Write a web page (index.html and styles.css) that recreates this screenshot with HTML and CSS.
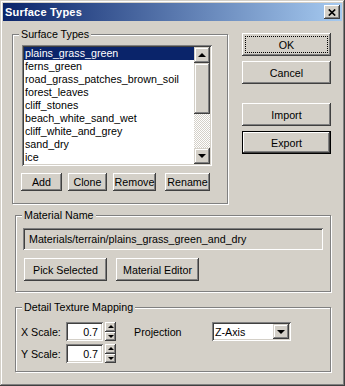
FILE: index.html
```html
<!DOCTYPE html>
<html>
<head>
<meta charset="utf-8">
<link rel="stylesheet" href="styles.css">
</head>
<body>
<div class="window">
  <div class="titlebar">
    <span class="title">Surface Types</span>
    <span class="close"><svg width="8" height="7" viewBox="0 0 8 7"><path d="M0.8 0.5 L7.2 6.5 M7.2 0.5 L0.8 6.5" stroke="#000" stroke-width="1.7" fill="none"/></svg></span>
  </div>
  <div class="client">
    <div class="top-row">
      <div class="group group-surface">
        <span class="legend">Surface Types</span>
        <div class="listbox">
          <ul class="items">
            <li class="selected">plains_grass_green</li>
            <li>ferns_green</li>
            <li>road_grass_patches_brown_soil</li>
            <li>forest_leaves</li>
            <li>cliff_stones</li>
            <li>beach_white_sand_wet</li>
            <li>cliff_white_and_grey</li>
            <li>sand_dry</li>
            <li>ice</li>
          </ul>
          <div class="vscroll">
            <div class="sbtn"><i class="tri-up"></i></div>
            <div class="thumb"></div>
            <div class="track"></div>
            <div class="sbtn"><i class="tri-down"></i></div>
          </div>
        </div>
        <div class="list-buttons">
          <button class="btn b-add">Add</button>
          <button class="btn b-clone">Clone</button>
          <button class="btn b-remove">Remove</button>
          <button class="btn b-rename">Rename</button>
        </div>
      </div>
      <div class="side">
        <button class="btn side-btn focus"><span>OK</span></button>
        <button class="btn side-btn">Cancel</button>
        <button class="btn side-btn import">Import</button>
        <button class="btn side-btn default">Export</button>
      </div>
    </div>

    <div class="group group-material">
      <span class="legend">Material Name</span>
      <div class="field">Materials/terrain/plains_grass_green_and_dry</div>
      <div class="mat-buttons">
        <button class="btn mat-btn">Pick Selected</button>
        <button class="btn mat-btn">Material Editor</button>
      </div>
    </div>

    <div class="group group-detail">
      <span class="legend">Detail Texture Mapping</span>
      <div class="detail-grid">
        <span class="lbl">X Scale:</span>
        <div class="edit">0.7</div>
        <div class="spin"><div class="spin-btn"><i class="stri-up"></i></div><div class="spin-btn"><i class="stri-down"></i></div></div>
        <span class="lbl proj">Projection</span>
        <div class="combo"><span class="combo-text">Z-Axis</span><span class="combo-btn"><i class="tri-down"></i></span></div>
        <span class="lbl row2">Y Scale:</span>
        <div class="edit row2">0.7</div>
        <div class="spin row2"><div class="spin-btn"><i class="stri-up"></i></div><div class="spin-btn"><i class="stri-down"></i></div></div>
      </div>
    </div>
  </div>
</div>
</body>
</html>
```

FILE: styles.css
```css
* { box-sizing: border-box; }
html, body { margin: 0; padding: 0; }
body {
  font-family: "Liberation Sans", Arial, sans-serif;
  font-size: 10.7px;
  color: #000;
  background: #d4d0c8;
}
.window {
  width: 345px;
  height: 386px;
  padding: 3px;
  background: #d4d0c8;
  box-shadow: inset -1px -1px #404040, inset 1px 1px #d4d0c8, inset -2px -2px #808080, inset 2px 2px #fff;
}
.titlebar {
  height: 18px;
  display: flex;
  align-items: center;
  justify-content: space-between;
  padding: 0 2px 0 2px;
  background: linear-gradient(to right, #0a246a, #a6caf0);
}
.title {
  color: #fff;
  font-weight: bold;
  font-size: 11px;
  letter-spacing: 0.2px;
}
.close {
  width: 16px;
  height: 14px;
  display: flex;
  align-items: center;
  justify-content: center;
  background: #d4d0c8;
  box-shadow: inset -1px -1px #404040, inset 1px 1px #fff, inset -2px -2px #808080;
}
.close svg { display: block; }

.btn {
  font: inherit;
  color: #000;
  margin: 0;
  padding: 0;
  border: none;
  background: #d4d0c8;
  box-shadow: inset -1px -1px #404040, inset 1px 1px #fff, inset -2px -2px #808080, inset 2px 2px #d4d0c8;
  display: flex;
  align-items: center;
  justify-content: center;
  height: 23px;
}

.group {
  position: relative;
  border: 1px solid #808080;
  box-shadow: 1px 1px 0 #fff, inset 1px 1px 0 #fff;
}
.legend {
  position: absolute;
  top: -8px;
  left: 6px;
  padding: 0 2px;
  line-height: 14px;
  background: #d4d0c8;
}

.top-row {
  display: flex;
  align-items: flex-start;
  margin-top: 12px;
}
.group-surface {
  margin-left: 9px;
  margin-top: 1px;
  width: 216px;
  height: 170px;
  padding: 10px 0 0 9px;
}
.listbox {
  width: 190px;
  height: 121px;
  padding: 2px;
  display: flex;
  background: #fff;
  box-shadow: inset 1px 1px #808080, inset -1px -1px #fff, inset 2px 2px #404040, inset -2px -2px #d4d0c8;
}
.items {
  list-style: none;
  margin: 0;
  padding: 0;
  flex: 1;
}
.items li {
  height: 13px;
  line-height: 13px;
  padding-left: 1px;
  white-space: nowrap;
}
.items li.selected {
  background: #0a246a;
  color: #fff;
}
.vscroll {
  width: 16px;
  display: flex;
  flex-direction: column;
}
.sbtn {
  width: 16px;
  height: 16px;
  display: flex;
  align-items: center;
  justify-content: center;
  background: #d4d0c8;
  box-shadow: inset -1px -1px #404040, inset 1px 1px #d4d0c8, inset -2px -2px #808080, inset 2px 2px #fff;
}
.thumb {
  height: 51px;
  background: #d4d0c8;
  box-shadow: inset -1px -1px #404040, inset 1px 1px #d4d0c8, inset -2px -2px #808080, inset 2px 2px #fff;
}
.track {
  flex: 1;
  background: conic-gradient(#fff 25%, #d4d0c8 0 50%, #fff 0 75%, #d4d0c8 0) 0 0 / 2px 2px;
}
.tri-up {
  width: 0; height: 0;
  border-left: 4px solid transparent;
  border-right: 4px solid transparent;
  border-bottom: 4px solid #000;
}
.tri-down {
  width: 0; height: 0;
  border-left: 4px solid transparent;
  border-right: 4px solid transparent;
  border-top: 4px solid #000;
}
.list-buttons {
  display: flex;
  margin-top: 7px;
  margin-left: -1px;
}
.list-buttons .btn { height: 18px; }
.b-add { width: 41px; }
.b-clone { width: 39px; margin-left: 6px; }
.b-remove { width: 43px; margin-left: 6px; }
.b-rename { width: 45px; margin-left: 9px; }

.side {
  margin-left: 14px;
  display: flex;
  flex-direction: column;
}
.side-btn { width: 89px; }
.side-btn + .side-btn { margin-top: 5px; }
.side-btn.import { margin-top: 19px; }
.side-btn.focus span {
  display: flex;
  align-items: center;
  justify-content: center;
  width: 83px;
  height: 17px;
  outline: 1px dotted #000;
  outline-offset: -1px;
}
.side-btn.default {
  box-shadow: inset 0 0 0 1px #000, inset -2px -2px #404040, inset 2px 2px #fff, inset -3px -3px #808080;
}

.group-material {
  margin-left: 12px;
  margin-top: 11px;
  width: 316px;
  height: 77px;
  padding: 12px 0 0 7px;
}
.field {
  width: 300px;
  height: 22px;
  padding-left: 6px;
  display: flex;
  align-items: center;
  background: #d4d0c8;
  box-shadow: inset 1px 1px #808080, inset -1px -1px #fff, inset 2px 2px #404040, inset -2px -2px #d4d0c8;
}
.mat-buttons {
  display: flex;
  margin-top: 8px;
  margin-left: 1px;
}
.mat-btn { width: 83px; }
.mat-btn + .mat-btn { margin-left: 9px; }

.group-detail {
  margin-left: 12px;
  margin-top: 15px;
  width: 316px;
  height: 65px;
  padding: 14px 0 0 5px;
}
.detail-grid {
  display: grid;
  grid-template-columns: 45px 37px 2px 11px 18px 78px 79px;
  grid-template-rows: 19px 19px;
  row-gap: 3px;
  align-items: center;
}
.lbl { grid-column: 1; }
.lbl.proj { grid-column: 6; grid-row: 1; }
.row2 { grid-row: 2; }
.edit {
  grid-column: 2;
  height: 19px;
  display: flex;
  align-items: center;
  justify-content: flex-end;
  padding-right: 5px;
  background: #fff;
  box-shadow: inset 1px 1px #808080, inset -1px -1px #fff, inset 2px 2px #404040, inset -2px -2px #d4d0c8;
}
.spin {
  grid-column: 4;
  height: 19px;
  display: flex;
  flex-direction: column;
}
.spin-btn {
  flex: 1;
  display: flex;
  align-items: center;
  justify-content: center;
  background: #d4d0c8;
  box-shadow: inset -1px -1px #404040, inset 1px 1px #fff, inset -2px -2px #808080;
}
.stri-up {
  width: 0; height: 0;
  border-left: 3px solid transparent;
  border-right: 3px solid transparent;
  border-bottom: 3px solid #000;
}
.stri-down {
  width: 0; height: 0;
  border-left: 3px solid transparent;
  border-right: 3px solid transparent;
  border-top: 3px solid #000;
}
.combo {
  grid-column: 7;
  grid-row: 1;
  height: 19px;
  display: flex;
  align-items: stretch;
  padding: 2px;
  background: #fff;
  box-shadow: inset 1px 1px #808080, inset -1px -1px #fff, inset 2px 2px #404040, inset -2px -2px #d4d0c8;
}
.combo-text {
  flex: 1;
  display: flex;
  align-items: center;
  padding-left: 1px;
}
.combo-btn {
  width: 16px;
  display: flex;
  align-items: center;
  justify-content: center;
  background: #d4d0c8;
  box-shadow: inset -1px -1px #404040, inset 1px 1px #d4d0c8, inset -2px -2px #808080, inset 2px 2px #fff;
}
```
